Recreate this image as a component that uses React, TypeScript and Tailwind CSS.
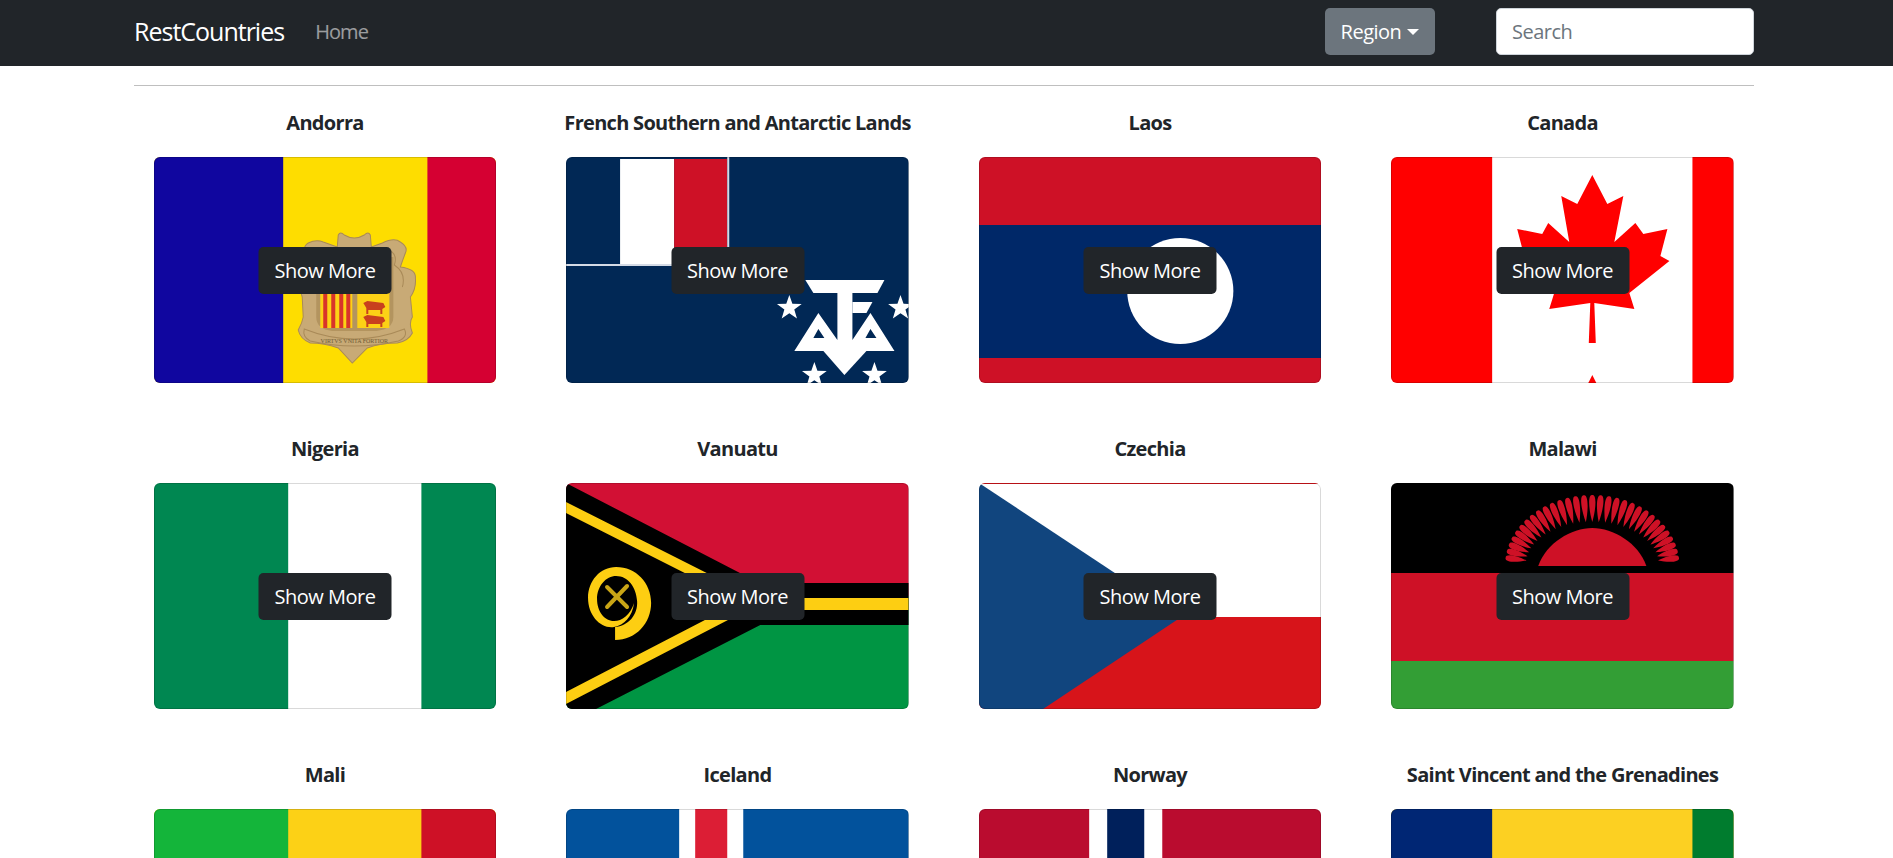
import type { ReactNode } from "react";

function starPoints(cx: number, cy: number, r: number) {
  const pts: string[] = [];
  for (let i = 0; i < 10; i++) {
    const rad = i % 2 === 0 ? r : r * 0.4;
    const a = (Math.PI / 5) * i - Math.PI / 2;
    pts.push(`${cx + rad * Math.cos(a)},${cy + rad * Math.sin(a)}`);
  }
  return pts.join(" ");
}

function Andorra() {
  return (
    <>
      <rect width="342" height="226" fill="#fedd00" />
      <rect width="129" height="226" fill="#10069f" />
      <rect x="273" width="69" height="226" fill="#d50032" />
      <path
        d="M184 78 Q186 74 190 78 Q200 84 210 78 Q214 74 216 78 L217 90 L228 86 Q240 80 246 85 Q254 90 251 96 Q248 104 246 110 Q262 112 261 121 Q262 132 256 140 L258 160 Q254 166 258 176 Q254 184 243 186 Q226 186 213 191 L198 206 L184 191 Q170 186 156 186 Q146 182 144 173 Q148 166 149 160 L148 140 Q144 130 151 123 Q146 106 149 96 Q150 88 154 86 Q162 82 169 85 L183 90 Z"
        fill="#c8aa76"
        stroke="#a98a58"
      />
      <path d="M232 92 Q244 96 240 108 Q252 116 248 130" fill="none" stroke="#a98a58" />
      <path d="M162 100 H239 V160 Q239 172 222 174 H178 Q162 172 162 160 Z" fill="#b3945f" />
      <rect x="166" y="100" width="32" height="71" fill="#fcd116" />
      <rect x="203" y="100" width="32" height="71" fill="#fcd116" />
      {[169, 177, 185, 192].map((x) => (
        <rect key={x} x={x} y="100" width="4" height="71" fill="#d8342a" />
      ))}
      <path d="M209 146 L213 144 L229 146 L231 150 L228 152 V157 H226 V153 H214 V157 H212 V151 Z" fill="#c8401e" />
      <path d="M209 160 L213 158 L229 160 L231 164 L228 166 V170 H226 V167 H214 V170 H212 V165 Z" fill="#c8401e" />
      <path d="M150 172 Q200 192 250 172 Q254 180 244 184 Q200 194 156 184 Q148 180 150 172 Z" fill="#c8aa76" stroke="#a98a58" />
      <text x="200" y="186" fontSize="6" textAnchor="middle" fill="#6e5a35" fontFamily="'Liberation Serif', serif">
        VIRTVS VNITA FORTIOR
      </text>
    </>
  );
}

function Taaf() {
  return (
    <>
      <rect width="342" height="226" fill="#012855" />
      <rect x="54" y="2" width="54" height="105" fill="#fff" />
      <rect x="108" y="2" width="53" height="105" fill="#ce1126" />
      <rect x="161" y="0" width="2" height="109" fill="#d5dbe6" />
      <rect x="0" y="107" width="163" height="2" fill="#d5dbe6" />
      <g fill="#fff">
        <polygon points="239,123 318,123 311,136 247,136" />
        <polygon points="286,145 306,145 300,156 286,156" />
        <path
          d="M252 156 L228 194 H328 L304 156 L286 183 V136 H271 V183 Z M252 172 L247 181 H258 Z M304 172 L299 181 H310 Z"
          fillRule="evenodd"
        />
        <polygon points="257,194 278,218 300,194" />
        <polygon points={starPoints(223, 151, 13)} />
        <polygon points={starPoints(334, 151, 13)} />
        <polygon points={starPoints(248, 218, 13)} />
        <polygon points={starPoints(308, 218, 13)} />
      </g>
    </>
  );
}

function Laos() {
  return (
    <>
      <rect width="342" height="226" fill="#ce1126" />
      <rect y="68" width="342" height="133" fill="#002868" />
      <circle cx="201" cy="134" r="53" fill="#fff" />
    </>
  );
}

function Canada() {
  return (
    <>
      <rect width="342" height="226" fill="#fff" />
      <rect width="101" height="226" fill="#f00" />
      <rect x="301" width="41" height="226" fill="#f00" />
      <polygon
        fill="#f00"
        points="201,18 216,47 232,39 223,85 244,66 252,77 276,72 269,99 278,104 238,136 243,152 203,146 204.5,186 197.5,186 199,146 158,152 163,136 124,104 133,99 126,72 151,77 157,66 178,85 170,39 186,47"
      />
      <polygon fill="#f00" points="201,218 197,226 205,226" />
    </>
  );
}

function Nigeria() {
  return (
    <>
      <rect width="342" height="226" fill="#008751" />
      <rect x="134" width="133" height="226" fill="#fff" />
    </>
  );
}

function Vanuatu() {
  return (
    <>
      <rect width="342" height="113" fill="#d21034" />
      <rect y="113" width="342" height="113" fill="#009543" />
      <polygon fill="#000" points="0,0 193,100 342,100 342,142 194,142 30,226 0,226" />
      <polygon
        fill="#fdce12"
        points="0,19 190,115 342,115 342,127 181,127 0,221 0,209 158,127 168,115 0,30"
      />
      <path
        fill="#fdce12"
        d="M49 157 C70 157 85 140 85 120 C85 100 70 84 50 84 C34 84 22 98 22 115 C22 133 35 146 48 144 C58 142 66 134 68 120 C64 132 56 138 48 138 C38 138 31 128 31 116 C31 103 40 93 50 93 C62 93 70 104 71 118 C72 132 62 143 49 144 Z"
      />
      <path d="M41 104 L61 124 M61 103 L41 124" stroke="#c9a516" strokeWidth="4" strokeLinecap="round" />
    </>
  );
}

function Czechia() {
  return (
    <>
      <rect width="342" height="134" fill="#fff" />
      <rect y="134" width="342" height="92" fill="#d7141a" />
      <polygon fill="#11457e" points="0,0 202,134 64,226 0,226" />
      <rect width="342" height="1" fill="#d7141a" />
    </>
  );
}

function Malawi() {
  const rays: ReactNode[] = [];
  for (let i = 0; i < 31; i++) {
    const a = ((-84 + (168 / 30) * i) * Math.PI) / 180;
    const ux = Math.sin(a);
    const uy = -Math.cos(a);
    const ix = 201 + 66 * ux;
    const iy = 82 + 43 * uy;
    const ox = 201 + 87 * ux;
    const oy = 82 + 70 * uy;
    const dx = ox - ix;
    const dy = oy - iy;
    const len = Math.hypot(dx, dy);
    const nx = (-dy / len) * 4.2;
    const ny = (dx / len) * 4.2;
    const c1 = `${ix + dx * 0.55 + nx} ${iy + dy * 0.55 + ny}`;
    const c2 = `${ix + dx * 1.04 + nx} ${iy + dy * 1.04 + ny}`;
    const c3 = `${ix + dx * 1.04 - nx} ${iy + dy * 1.04 - ny}`;
    const c4 = `${ix + dx * 0.55 - nx} ${iy + dy * 0.55 - ny}`;
    rays.push(
      <path key={i} d={`M${ix} ${iy} C${c1} ${c2} ${ox} ${oy} C${c3} ${c4} ${ix} ${iy} Z`} fill="#ce1126" />,
    );
  }
  return (
    <>
      <rect width="342" height="90" fill="#000" />
      <rect y="90" width="342" height="88" fill="#ce1126" />
      <rect y="178" width="342" height="48" fill="#339e35" />
      {rays}
      <path d="M147 83 C155 60 180 45 201 45 C222 45 247 60 255 83 Z" fill="#ce1126" />
    </>
  );
}

function Mali() {
  return (
    <>
      <rect width="342" height="226" fill="#fcd116" />
      <rect width="134" height="226" fill="#14b53a" />
      <rect x="267" width="75" height="226" fill="#ce1126" />
    </>
  );
}

function Iceland() {
  return (
    <>
      <rect width="342" height="226" fill="#02529c" />
      <rect x="113" width="64" height="226" fill="#fff" />
      <rect x="129" width="32" height="226" fill="#dc1e35" />
    </>
  );
}

function Norway() {
  return (
    <>
      <rect width="342" height="226" fill="#ba0c2f" />
      <rect x="110" width="73" height="226" fill="#fff" />
      <rect x="128" width="37" height="226" fill="#00205b" />
    </>
  );
}

function SaintVincent() {
  return (
    <>
      <rect width="342" height="226" fill="#fcd022" />
      <rect width="101" height="226" fill="#002674" />
      <rect x="301" width="41" height="226" fill="#007c2e" />
    </>
  );
}

const countries = [
  { name: "Andorra", flag: <Andorra /> },
  { name: "French Southern and Antarctic Lands", flag: <Taaf /> },
  { name: "Laos", flag: <Laos /> },
  { name: "Canada", flag: <Canada /> },
  { name: "Nigeria", flag: <Nigeria /> },
  { name: "Vanuatu", flag: <Vanuatu /> },
  { name: "Czechia", flag: <Czechia /> },
  { name: "Malawi", flag: <Malawi /> },
  { name: "Mali", flag: <Mali /> },
  { name: "Iceland", flag: <Iceland /> },
  { name: "Norway", flag: <Norway /> },
  { name: "Saint Vincent and the Grenadines", flag: <SaintVincent /> },
];

function Navbar() {
  return (
    <nav className="flex h-[66px] w-[1893px] items-center bg-[#212529] pb-[3px] pl-[134px] pr-[139px]">
      <a className="text-[25px] tracking-[-1px] text-white">RestCountries</a>
      <a className="ml-[31px] text-[20px] tracking-[-0.9px] text-white/55">Home</a>
      <button className="ml-auto flex h-[47px] w-[110px] items-center justify-center rounded-[5px] bg-[#6c757d] text-[20px] tracking-[-0.5px] text-white">
        Region
        <span className="ml-[6px] h-0 w-0 border-x-[6px] border-t-[6px] border-x-transparent border-t-white" />
      </button>
      <input
        placeholder="Search"
        className="ml-[61px] h-[47px] w-[258px] rounded-[5px] border border-[#ced4da] bg-white px-[15px] text-[20px] tracking-[-0.5px] text-[#212529] placeholder:text-[#6c757d]"
      />
    </nav>
  );
}

function CountryCard({ name, flag }: { name: string; flag: ReactNode }) {
  return (
    <div className="flex flex-col items-center px-[35px] pb-[54px]">
      <h5 className="mb-[22px] whitespace-nowrap text-[20px] font-bold leading-[24px] tracking-[-0.7px] text-[#212529]">
        {name}
      </h5>
      <div className="relative h-[226px] w-full overflow-hidden rounded-[6px]">
        <svg viewBox="0 0 342 226" preserveAspectRatio="none" className="block h-full w-full">
          {flag}
        </svg>
        <div className="absolute inset-0 rounded-[6px] border border-black/15" />
        <button className="absolute left-1/2 top-[90px] h-[47px] w-[133px] -translate-x-1/2 rounded-[5px] bg-[#212529] text-[20px] tracking-[-0.5px] text-white">
          Show More
        </button>
      </div>
    </div>
  );
}

export default function App() {
  return (
    <div className="bg-white font-['Open_Sans',sans-serif]">
      <Navbar />
      <main className="ml-[118.75px] w-[1650px]">
        <hr className="mx-[15.25px] mb-[25px] mt-[19px] border-t border-[#bfbfbf]" />
        <div className="grid grid-cols-4">
          {countries.map((c) => (
            <CountryCard key={c.name} name={c.name} flag={c.flag} />
          ))}
        </div>
      </main>
    </div>
  );
}
